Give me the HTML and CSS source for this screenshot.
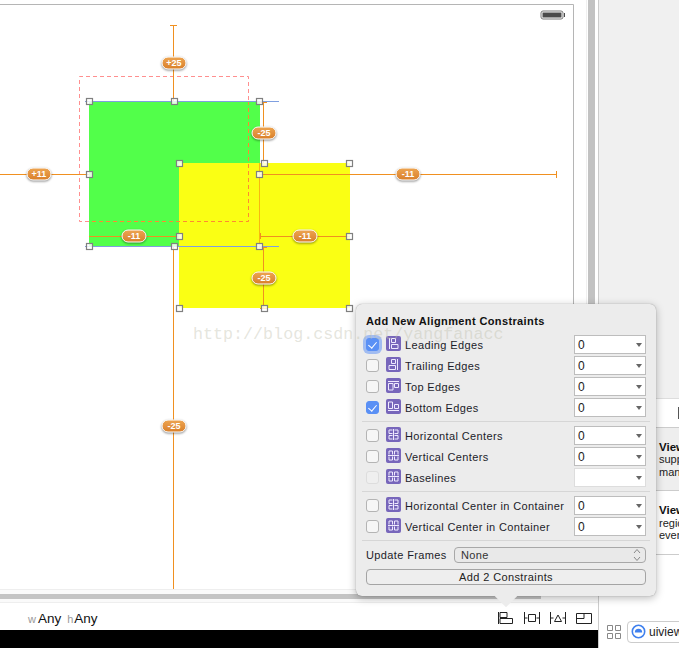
FILE: index.html
```html
<!DOCTYPE html>
<html lang="en">
	<head>
		<meta charset="UTF-8">
		<title>Add New Alignment Constraints</title>
		<link rel="stylesheet" href="styles.css">
	</head>
	<body>
		<!-- shared icons -->
		<svg class="defs" width="0" height="0">
			<defs>
				<linearGradient id="badgeFill" x1="0" y1="0" x2="0" y2="1">
					<stop offset="0" stop-color="#eda552"/>
					<stop offset="1" stop-color="#d97f2a"/>
				</linearGradient>
				<symbol id="i-leading" viewBox="0 0 15 15"><path d="M3.500 2v11M5.500 2.500h4v4h-4zM5.500 8.500h6.500v4h-6.500z"/></symbol>
				<symbol id="i-trailing" viewBox="0 0 15 15"><path d="M11.500 2v11M5.500 2.500h4v4h-4zM3 8.500h6.500v4h-6.500z"/></symbol>
				<symbol id="i-top" viewBox="0 0 15 15"><path d="M2 3.500h11M2.500 5.500h4.500v6.500h-4.500zM8.500 5.500h4v4h-4z"/></symbol>
				<symbol id="i-bottom" viewBox="0 0 15 15"><path d="M2 11.500h11M2.500 3h4v6.500h-4zM8.500 5.500h4v4h-4z"/></symbol>
				<symbol id="i-hcenter" viewBox="0 0 15 15"><path d="M7.500 2v11M6.500 3h-3.500v3.500h3.500M8.500 3h3.500v3.500h-3.500M6.500 8.500h-3.500v3.500h3.500M8.500 8.500h3.500v3.500h-3.500"/></symbol>
				<symbol id="i-vcenter" viewBox="0 0 15 15"><path d="M2 7.500h11M3 6.500v-3.500h3.500v3.500M8.500 6.500v-3.500h3.500v3.500M3 8.500v3.500h3.500v-3.500M8.500 8.500v3.500h3.500v-3.500"/></symbol>
			</defs>
		</svg>

		<div class="editor">
			<div class="editor-top">
				<div class="canvas">
					<svg class="scene" width="586" height="589" viewBox="0 0 586 589">
						<path class="frame" d="M0 4.500h573.500v585"/>
						<!-- battery -->
						<rect class="batt" x="541" y="11" width="22" height="8" rx="2"/>
						<rect class="batt-in" x="542.500" y="12.500" width="19" height="5"/>
						<rect class="batt-in" x="564" y="13" width="1" height="4"/>

						<rect class="green" x="89" y="101" width="171" height="145"/>
						<rect class="yellow" x="179" y="163" width="171" height="145"/>

						<!-- dashed preview frame -->
						<path class="dash" d="M89 221.500h-9.500v-145h169v24.500"/>
						<path class="dash dash-on" d="M248.500 101v120.500h-159.500"/>

						<!-- constraint lines -->
						<path class="cons" d="M173.500 25v76M170 25.500h7M173.500 247v342M0 174.500h89"/>
						<path class="cons" d="M260 174.500h296M556.500 171v7M263.500 102v61M259 102.500h8M89 236.500h90M260.500 233v6M260 236.500h90M263.500 247v61M259 247.500h8M260 308.500h8"/>
						<path class="align" d="M259.500 163v83"/>
						<path class="guide" d="M85 101.500h194M85 246.500h194"/>

						<!-- handles -->
						<g class="handles">
							<rect x="86.500" y="98.500" width="6" height="6"/>
							<rect x="171.500" y="98.500" width="6" height="6"/>
							<rect x="256.500" y="98.500" width="6" height="6"/>
							<rect x="86.500" y="171.500" width="6" height="6"/>
							<rect x="256.500" y="171.500" width="6" height="6"/>
							<rect x="86.500" y="243.500" width="6" height="6"/>
							<rect x="171.500" y="243.500" width="6" height="6"/>
							<rect x="256.500" y="243.500" width="6" height="6"/>
							<rect x="176.500" y="160.500" width="6" height="6"/>
							<rect x="261.500" y="160.500" width="6" height="6"/>
							<rect x="346.500" y="160.500" width="6" height="6"/>
							<rect x="176.500" y="233.500" width="6" height="6"/>
							<rect x="346.500" y="233.500" width="6" height="6"/>
							<rect x="176.500" y="305.500" width="6" height="6"/>
							<rect x="261.500" y="305.500" width="6" height="6"/>
							<rect x="346.500" y="305.500" width="6" height="6"/>
						</g>

						<!-- badges -->
						<g class="badge" transform="translate(174 63)"><rect x="-12" y="-6" width="24" height="12" rx="6"/><text y="3">+25</text></g>
						<g class="badge" transform="translate(264 133)"><rect x="-12" y="-6" width="24" height="12" rx="6"/><text y="3">-25</text></g>
						<g class="badge" transform="translate(39 174)"><rect x="-12" y="-6" width="24" height="12" rx="6"/><text y="3">+11</text></g>
						<g class="badge" transform="translate(408 174)"><rect x="-12" y="-6" width="24" height="12" rx="6"/><text y="3">-11</text></g>
						<g class="badge" transform="translate(134 236)"><rect x="-12" y="-6" width="24" height="12" rx="6"/><text y="3">-11</text></g>
						<g class="badge" transform="translate(305 236)"><rect x="-12" y="-6" width="24" height="12" rx="6"/><text y="3">-11</text></g>
						<g class="badge" transform="translate(264 278)"><rect x="-12" y="-6" width="24" height="12" rx="6"/><text y="3">-25</text></g>
						<g class="badge" transform="translate(174 426)"><rect x="-12" y="-6" width="24" height="12" rx="6"/><text y="3">-25</text></g>
					</svg>
				</div>
				<div class="vscroll"><div class="vthumb"></div></div>
			</div>
			<div class="hscroll"><div class="hthumb"></div></div>
			<div class="sizebar">
				<div class="size-class">
					<span class="dim">w</span><span class="any">Any</span>
					<span class="dim dim-h">h</span><span class="any">Any</span>
				</div>
				<div class="tools">
					<svg width="16" height="12" viewBox="0 0 16 12"><path d="M.5 0v12M2 .5h7v5h-7zM2 6.500h12.500v5h-12.500z"/></svg>
					<svg width="16" height="12" viewBox="0 0 16 12"><path d="M.5 0v12M15.500 0v12M.5 6h3M12.500 6h3M4.500 2.500h7v7h-7z"/></svg>
					<svg width="16" height="12" viewBox="0 0 16 12"><path d="M.5 0v12M15.500 0v12M.5 6h3M12.500 6h3M8 3l3.500 6.500h-7z"/></svg>
					<svg width="16" height="12" viewBox="0 0 16 12"><path d="M.5 1.500h15v10h-15zM.5 6.500h7.500v-5"/></svg>
				</div>
			</div>
			<div class="blackbar"></div>
		</div>

		<div class="inspector">
			<div class="insp-top"></div>
			<div class="insp-tabs"><span class="tab-glyph"></span></div>
			<div class="lib-row lib-row-on">
				<b>View</b>
				<span>supports</span>
				<span>manages</span>
			</div>
			<div class="lib-row lib-row-tall">
				<b>View</b>
				<span>region</span>
				<span>events</span>
			</div>
			<div class="insp-space"></div>
			<div class="insp-bottom">
				<svg class="grid-icon" width="14" height="14" viewBox="0 0 14 14"><path d="M.5.500h5v5h-5zM8.500.500h5v5h-5zM.5 8.500h5v5h-5zM8.500 8.500h5v5h-5z"/></svg>
				<div class="filter">
					<svg width="15" height="15" viewBox="0 0 15 15"><circle class="ring" cx="7.500" cy="7.500" r="6.200"/><path class="cap" d="M3.800 8.500a3.700 3.700 0 0 1 7.400 0z"/></svg>
					<span>uiview</span>
				</div>
			</div>
		</div>

		<!-- popover -->
		<div class="popover">
			<div class="pop-title">Add New Alignment Constraints</div>
			<div class="group">
				<div class="row"><span class="check on glow"></span><svg class="ico"><use href="#i-leading"/></svg><span class="label">Leading Edges</span><span class="num">0</span></div>
				<div class="row"><span class="check"></span><svg class="ico"><use href="#i-trailing"/></svg><span class="label">Trailing Edges</span><span class="num">0</span></div>
				<div class="row"><span class="check"></span><svg class="ico"><use href="#i-top"/></svg><span class="label">Top Edges</span><span class="num">0</span></div>
				<div class="row"><span class="check on"></span><svg class="ico"><use href="#i-bottom"/></svg><span class="label">Bottom Edges</span><span class="num">0</span></div>
			</div>
			<div class="group">
				<div class="row"><span class="check"></span><svg class="ico"><use href="#i-hcenter"/></svg><span class="label">Horizontal Centers</span><span class="num">0</span></div>
				<div class="row"><span class="check"></span><svg class="ico"><use href="#i-vcenter"/></svg><span class="label">Vertical Centers</span><span class="num">0</span></div>
				<div class="row"><span class="check off"></span><svg class="ico"><use href="#i-vcenter"/></svg><span class="label">Baselines</span><span class="num num-off"></span></div>
			</div>
			<div class="group">
				<div class="row"><span class="check"></span><svg class="ico"><use href="#i-hcenter"/></svg><span class="label">Horizontal Center in Container</span><span class="num">0</span></div>
				<div class="row"><span class="check"></span><svg class="ico"><use href="#i-vcenter"/></svg><span class="label">Vertical Center in Container</span><span class="num">0</span></div>
			</div>
			<div class="frames">
				<span class="label">Update Frames</span>
				<div class="frames-select">
					<span>None</span>
					<svg width="8" height="14" viewBox="0 0 8 14"><path d="M1 5l3-3.500 3 3.500M1 9l3 3.500 3-3.500"/></svg>
				</div>
			</div>
			<div class="add-btn">Add 2 Constraints</div>
		</div>

		<div class="watermark">http://blog.csdn.net/yangfanacc</div>
	</body>
</html>
```

FILE: styles.css
```css
* { padding: 0; margin: 0; box-sizing: border-box; }

html, body { height: 100%; }

body {
	display: flex;
	position: relative;
	width: 679px;
	height: 648px;
	overflow: hidden;
	background: #fff;
	font: 11px "Liberation Sans", Arial, sans-serif;
	color: #222;
}

.defs { position: absolute; }

/* left side */
.editor {
	display: flex;
	flex-direction: column;
	flex: none;
	width: 598px;
}

.editor-top { display: flex; height: 589px; }

.canvas { flex: none; width: 586px; }

.scene { display: block; }

.vscroll {
	flex: none;
	width: 12px;
	padding: 0 3px 0 1px;
	border-left: 1px solid #f0f0f0;
}

.vthumb { height: 100%; background: #c2c2c2; }

.hscroll {
	height: 14px;
	padding: 4px 57px 3px 0;
	border-top: 1px solid #eee;
	border-bottom: 1px solid #eee;
	background: #fafafa;
}

.hthumb { height: 100%; background: #c4c4c4; }

.sizebar {
	display: flex;
	align-items: center;
	justify-content: space-between;
	height: 27px;
	padding: 3px 6px 0 28px;
}

.size-class { display: flex; align-items: baseline; }

.dim { font-size: 11px; color: #999; margin-right: 2px; }

.dim-h { margin-left: 6px; margin-right: 1px; }

.any { font-size: 13.500px; color: #111; }

.tools { display: flex; gap: 10px; }

.tools svg { fill: none; stroke: #222; stroke-width: 1; }

.blackbar { flex: 1; background: #000; }

/* canvas drawing */
.frame { fill: none; stroke: #b5b5b5; }

.batt { fill: none; stroke: #777; }

.batt-in { fill: #4a4a4a; }

.green { fill: #52ff4a; }

.yellow { fill: #faff14; }

.dash { fill: none; stroke: #ff8f8f; stroke-dasharray: 4 3; }

.dash-on { stroke: #ff8a30; }

.cons { fill: none; stroke: #f09020; }

.align { fill: none; stroke: #f8b810; }

.guide { fill: none; stroke: #7f9fe0; }

.handles rect { fill: rgba(255, 255, 255, .82); stroke: #808080; stroke-width: 1.200; }

.badge rect {
	fill: url(#badgeFill);
	stroke: #fff;
	filter: drop-shadow(0 1px 1px rgba(0, 0, 0, .45));
}

.badge text {
	fill: #fff;
	font: bold 9px "Liberation Sans", Arial, sans-serif;
	text-anchor: middle;
}

/* right side */
.inspector {
	display: flex;
	flex-direction: column;
	flex: 1;
	min-width: 0;
	border-left: 1px solid #ccc;
}

.insp-top { height: 399px; background: #f0f0f0; border-bottom: 1px solid #ddd; }

.insp-tabs {
	display: flex;
	justify-content: flex-end;
	align-items: center;
	height: 29px;
	border-bottom: 1px solid #ccc;
}

.tab-glyph { width: 1px; height: 12px; background: #555; }

.lib-row {
	display: flex;
	flex-direction: column;
	justify-content: center;
	height: 63px;
	padding: 1px 0 0 60px;
	border-bottom: 1px solid #ccc;
	line-height: 12.500px;
	white-space: nowrap;
	overflow: hidden;
}

.lib-row b { font-size: 11.500px; color: #111; }

.lib-row-on { background: #eee; }

.lib-row-tall { height: 64px; }

.insp-space { flex: 1; }

.insp-bottom {
	display: flex;
	align-items: center;
	gap: 6px;
	height: 30px;
	padding: 0 0 3px 8px;
}

.grid-icon { flex: none; fill: none; stroke: #888; }

.filter {
	display: flex;
	align-items: center;
	gap: 3px;
	flex: none;
	width: 70px;
	height: 22px;
	padding-left: 3px;
	border: 1px solid #ccc;
	border-radius: 4px;
	font-size: 12px;
	color: #222;
}

.ring { fill: none; stroke: #3f80ee; stroke-width: 1.600; }

.cap { fill: #3f80ee; }

/* popover */
.popover {
	position: absolute;
	left: 356px;
	top: 304px;
	width: 300px;
	height: 292px;
	padding: 11px 10px 0;
	background: #ececec;
	border-radius: 6px;
	box-shadow: 0 0 1px rgba(0, 0, 0, .4), 0 2px 9px rgba(0, 0, 0, .28);
	letter-spacing: .38px;
}

.popover::after {
	content: "";
	position: absolute;
	left: 142px;
	bottom: -8px;
	width: 16px;
	height: 16px;
	background: #ececec;
	transform: rotate(45deg);
}

.pop-title {
	height: 19px;
	font-weight: bold;
	font-size: 11px;
	line-height: 13px;
	color: #111;
}

.group {
	margin: 0 -4px;
	padding: 0 4px 3px;
	border-bottom: 1px solid #d6d6d6;
}

.group + .group { padding-top: 3px; }

.row {
	display: flex;
	align-items: center;
	height: 21px;
}

.check {
	flex: none;
	position: relative;
	width: 13px;
	height: 13px;
	background: #f6f6f6;
	border: 1px solid #b4b4b4;
	border-radius: 3px;
}

.check.on { background: #5a90f5; border-color: #5a90f5; }

.check.on::after {
	content: "";
	position: absolute;
	left: 3px;
	top: 1px;
	width: 4px;
	height: 7px;
	border: solid #fff;
	border-width: 0 1.500px 1.500px 0;
	transform: rotate(40deg);
}

.check.glow { box-shadow: 0 0 0 3px rgba(100, 150, 245, .55); }

.check.off { border-color: #ddd; background: #efefef; }

.ico {
	flex: none;
	width: 15px;
	height: 15px;
	margin: -2px 4px 0 7px;
	background: #7766bb;
	border-radius: 2px;
	fill: none;
	stroke: #efeaff;
	stroke-width: 1;
}

.label { flex: 1; white-space: nowrap; color: #1c1c2a; }

.num {
	position: relative;
	flex: none;
	width: 72px;
	height: 19px;
	padding-left: 3px;
	background: #fff;
	border: 1px solid #bdbdbd;
	line-height: 18px;
	font-size: 12px;
}

.num::after {
	content: "";
	position: absolute;
	right: 3px;
	top: 7px;
	border: 3.500px solid transparent;
	border-top: 4px solid #666;
	border-bottom: 0;
}

.num-off { border-color: #ddd; }

.frames {
	display: flex;
	align-items: center;
	gap: 7px;
	height: 20px;
	margin-top: 4px;
}

.frames .label { flex: none; width: 81px; }

.frames-select {
	display: flex;
	align-items: center;
	justify-content: space-between;
	flex: 1;
	height: 16px;
	padding: 0 4px 0 6px;
	background: #e9e9e9;
	border: 1px solid #a8a8a8;
	border-radius: 4px;
	color: #333;
}

.frames-select svg { fill: none; stroke: #888; }

.add-btn {
	height: 16px;
	margin-top: 4px;
	border: 1px solid #a4a4a4;
	border-radius: 4px;
	background: #eee;
	text-align: center;
	line-height: 14px;
	color: #222;
}

/* sits over everything, popover included */
.watermark {
	position: absolute;
	left: 193px;
	top: 325px;
	font: 16.700px "Liberation Mono", "Courier New", monospace;
	color: rgba(190, 190, 170, .4);
	white-space: nowrap;
	pointer-events: none;
}
```
